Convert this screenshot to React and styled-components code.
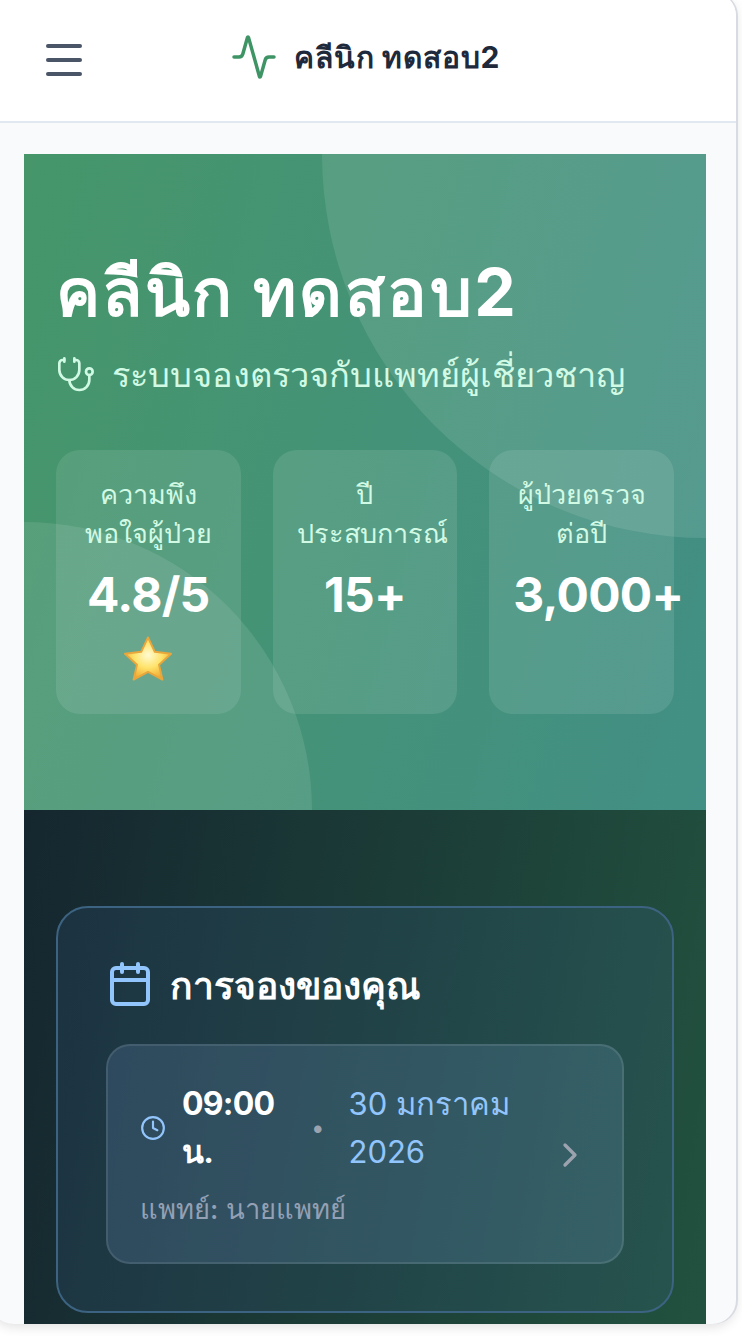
import React from "react";
import styled, { createGlobalStyle } from "styled-components";
import { Menu, Activity, Stethoscope, Calendar, Clock, ChevronRight } from "lucide-react";

const Global = createGlobalStyle`
    html, body {
        margin: 0;
        padding: 0;
        background: #ffffff;
    }
    * {
        box-sizing: border-box;
    }
`;

const Page = styled.div`
    width: 742px;
    height: 1336px;
    overflow: hidden;
`;

// the window runs a little past the top and left of the photo, so only its right corners show
const Frame = styled.div`
    width: 746px;
    height: 1332px;
    margin: -8px 0 0 -10px;
    overflow: hidden;
    background: #f9fafc;
    border-radius: 24px;
    box-shadow: 2px 0 0 #d9dbe2, 0 3px 12px rgba(0, 0, 0, 0.12);
    font-family: Inter, "Noto Sans", "Liberation Sans", sans-serif;
`;

const Header = styled.header`
    height: 131px;
    padding: 8px 50px 0;
    display: flex;
    align-items: center;
    background: #ffffff;
    border-bottom: 2px solid #e2e8f0;
`;

const MenuButton = styled.div`
    display: flex;
    color: #4a5568;
    margin-top: -2px;
`;

const Brand = styled.div`
    display: flex;
    align-items: center;
    gap: 16px;
    margin-left: 142px;
    color: #3f9466;
    margin-top: -8px;
`;

const BrandName = styled.span`
    padding-top: 1px;
    font-size: 30px;
    letter-spacing: 0.85px;
    font-weight: 700;
    color: #1e293b;
`;

const Content = styled.main`
    padding: 31px 30px 0 34px;
`;

const Hero = styled.section`
    position: relative;
    overflow: hidden;
    height: 656px;
    padding: 93px 32px 0;
    color: #ffffff;
    background: linear-gradient(105deg, #46966a, #428f85);
`;

const Blob = styled.div`
    position: absolute;
    width: ${(p) => p.$size}px;
    height: ${(p) => p.$size}px;
    border-radius: 50%;
    background: rgba(255, 255, 255, 0.1);
    transform: translate(-50%, -50%);
    left: ${(p) => p.$x};
    top: ${(p) => p.$y};
`;

const HeroInner = styled.div`
    position: relative;
`;

const Title = styled.h1`
    margin: 0;
    font-size: 66px;
    letter-spacing: 2.45px;
    line-height: 90px;
    font-weight: 700;
`;

const Subtitle = styled.p`
    margin: 14px 0 0;
    display: flex;
    align-items: center;
    gap: 16px;
    font-size: 34.4px;
    line-height: 48px;
    font-weight: 500;
    color: #d1fae5;
`;

const Stats = styled.div`
    display: grid;
    grid-template-columns: repeat(3, minmax(0, 1fr));
    gap: 32px;
    margin-top: 51px;
`;

const Stat = styled.div`
    height: 264px;
    padding: 25px 24px 0;
    text-align: center;
    border-radius: 24px;
    background: rgba(255, 255, 255, 0.1);
`;

const StatLabel = styled.div`
    font-size: 27px;
    line-height: 39px;
    font-weight: 500;
    color: #d1fae5;
`;

const StatValue = styled.div`
    margin-top: 11px;
    font-size: 48px;
    letter-spacing: -0.7px;
    line-height: 62px;
    font-weight: 700;
    color: #ffffff;
`;

const Star = styled.svg`
    vertical-align: -8px;
`;

const Dark = styled.section`
    height: 514px;
    padding: 96px 32px 0;
    background: linear-gradient(100deg, #15262f, #22523f);
`;

const Card = styled.div`
    height: 407px;
    padding: 48px;
    border: 2px solid #3d6382;
    border-radius: 32px;
    background: rgba(64, 110, 170, 0.15);
`;

const CardHeading = styled.h2`
    margin: 0 0 32px;
    display: flex;
    align-items: center;
    gap: 16px;
    font-size: 37.2px;
    line-height: 56px;
    font-weight: 700;
    color: #ffffff;
    svg {
        color: #93c5fd;
    }
`;

const HeadingText = styled.span`
    padding-top: 4px;
    line-height: 52px;
`;

const Booking = styled.div`
    height: 220px;
    display: flex;
    align-items: center;
    gap: 16px;
    padding: 0 32px;
    border: 2px solid rgba(255, 255, 255, 0.1);
    border-radius: 24px;
    background: rgba(150, 190, 250, 0.15);
`;

const BookingInfo = styled.div`
    flex: 1;
    min-width: 0;
    padding-top: 2px;
`;

const When = styled.div`
    display: flex;
    align-items: center;
    gap: 14px;
    font-size: 31px;
    line-height: 48px;
    svg {
        color: #93c5fd;
        flex-shrink: 0;
        margin-right: 2px;
    }
`;

const Time = styled.span`
    flex: 0 0 115px;
    font-size: 32px;
    font-weight: 700;
    letter-spacing: -0.8px;
    color: #ffffff;
`;

const Dot = styled.span`
    margin-right: 10px;
    color: #9ca3af;
    font-size: 24px;
`;

const DateText = styled.span`
    color: #93c5fd;
`;

const Doctor = styled.div`
    margin-top: 13px;
    font-size: 27.3px;
    line-height: 42px;
    font-weight: 500;
    color: #94a0b4;
`;

const Arrow = styled.div`
    display: flex;
    margin-top: 1px;
    color: #9ca3af;
`;

const StarIcon = () => (
    <Star width="48" height="47" viewBox="0 0 50 48">
        <defs>
            <radialGradient id="star" cx="0.5" cy="0.42" r="0.6">
                <stop offset="0" stopColor="#fffbd2" />
                <stop offset="0.5" stopColor="#ffe36b" />
                <stop offset="1" stopColor="#eda52c" />
            </radialGradient>
        </defs>
        <path
            d="M25 2l7 15 17 2-12.500 11.500L40 46 25 38 10 46l3.500-15.500L1 19l17-2z"
            fill="url(#star)"
            stroke="#e9a63c"
            strokeWidth="2"
            strokeLinejoin="round"
        />
    </Star>
);

const stats = [
    { label: "ความพึงพอใจผู้ป่วย", value: "4.8/5", star: true },
    { label: "ปีประสบการณ์", value: "15+" },
    { label: "ผู้ป่วยตรวจต่อปี", value: "3,000+" },
];

const App = () => {
    return (
        <Page>
            <Global />
            <Frame>
                <Header>
                    <MenuButton>
                        <Menu size={48} />
                    </MenuButton>
                    <Brand>
                        <Activity size={48} strokeWidth={1.75} />
                        <BrandName>คลีนิก ทดสอบ2</BrandName>
                    </Brand>
                </Header>
                <Content>
                    <Hero>
                        <Blob $size={768} $x="100%" $y="0" />
                        <Blob $size={576} $x="0" $y="100%" />
                        <HeroInner>
                            <Title>คลีนิก ทดสอบ2</Title>
                            <Subtitle>
                                <Stethoscope size={40} strokeWidth={1.6} />
                                ระบบจองตรวจกับแพทย์ผู้เชี่ยวชาญ
                            </Subtitle>
                            <Stats>
                                {stats.map((s) => (
                                    <Stat key={s.value}>
                                        <StatLabel>{s.label}</StatLabel>
                                        <StatValue>
                                            {s.value} {s.star && <StarIcon />}
                                        </StatValue>
                                    </Stat>
                                ))}
                            </Stats>
                        </HeroInner>
                    </Hero>
                    <Dark>
                        <Card>
                            <CardHeading>
                                <Calendar size={48} />
                                <HeadingText>การจองของคุณ</HeadingText>
                            </CardHeading>
                            <Booking>
                                <BookingInfo>
                                    <When>
                                        <Clock size={26} />
                                        <Time>09:00 น.</Time>
                                        <Dot>•</Dot>
                                        <DateText>30 มกราคม 2026</DateText>
                                    </When>
                                    <Doctor>แพทย์: นายแพทย์</Doctor>
                                </BookingInfo>
                                <Arrow>
                                    <ChevronRight size={40} />
                                </Arrow>
                            </Booking>
                        </Card>
                    </Dark>
                </Content>
            </Frame>
        </Page>
    );
};

export default App;
